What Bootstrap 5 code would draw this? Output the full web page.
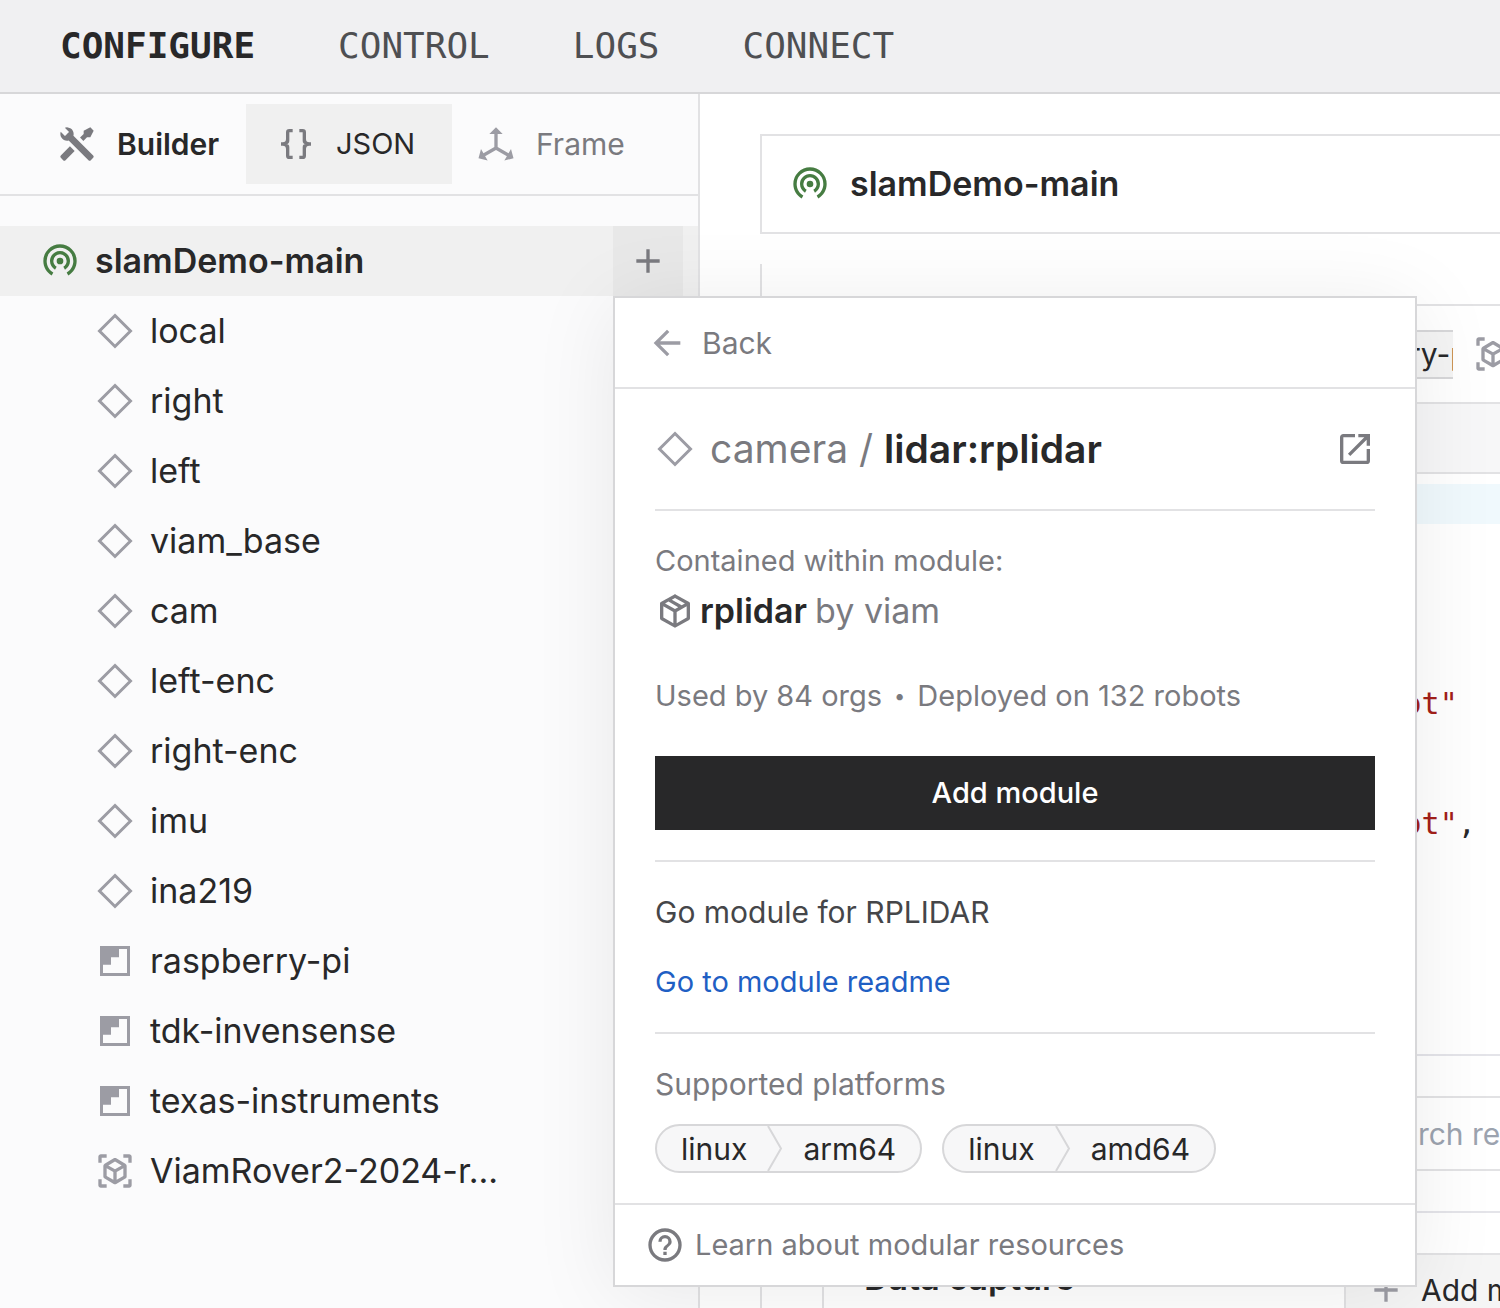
<!DOCTYPE html>
<html lang="en">
<head>
<meta charset="utf-8">
<meta name="viewport" content="width=device-width, initial-scale=1">
<title>slamDemo-main – Configure</title>
<link href="https://cdn.jsdelivr.net/npm/bootstrap@5.3.0/dist/css/bootstrap.min.css" rel="stylesheet">
<script defer src="https://cdn.jsdelivr.net/npm/bootstrap@5.3.0/dist/js/bootstrap.bundle.min.js"></script>
<style>
  :root { --ink: #282829; --muted: #7a7a7f; --soft: #9c9ca4; --line: #e2e2e4; --edge: #d7d7d9; --shade: #f0f0f0; }
  body { font-family: Inter, "Liberation Sans", sans-serif; font-size: 30px; line-height: 40px; color: var(--ink); }
  button, input { font: inherit; color: inherit; }
  a { text-decoration: none; }
  .ico { width: 40px; height: 40px; flex: none; fill: currentColor; }
  .soft { color: var(--soft); }
  .muted { color: var(--muted); }
  .ink { color: var(--ink); }
  .semi { font-weight: 600; }
  .live { color: #467c42; }
  .heading-text { font-size: 34px; font-weight: 600; }
  .note-text { font-size: 29px; }

  .topnav { background: #f0f0f2; border-bottom: 2px solid var(--edge); height: 94px; padding: 0 60px; gap: 83px; font: 36px/40px "DejaVu Sans Mono", monospace; }
  .topnav a { color: #4e4f52; }
  .topnav a.active { color: var(--ink); font-weight: 700; }

  .side { width: 700px; flex: none; background: #fbfbfc; border-right: 2px solid var(--line); }
  .tabs { height: 102px; border-bottom: 2px solid var(--line); padding-left: 27px; }
  .tab { height: 80px; border: 0; background: none; display: flex; align-items: center; gap: 20px; padding: 0 0 0 30px; }
  .tab-builder { width: 219px; }
  .tab-json { width: 206px; background: var(--shade); }
  .tab-frame { padding-left: 24px; }
  .tree { padding-top: 30px; }
  .tree-row { height: 70px; gap: 15px; }
  .tree-root { background: var(--shade); padding: 0 15px 0 40px; }
  .tree-item { padding-left: 95px; color: inherit; font-size: 34px; }
  .plus-btn { width: 70px; height: 70px; border: 0; background: #e8e8e8; color: var(--muted); }

  .pop { left: 0; top: 100%; width: 804px; z-index: 10; background: #fff; border: 2px solid var(--edge); box-shadow: 0 8px 80px rgba(0,0,0,.08); }
  .pop-head { height: 91px; border: 0; border-bottom: 2px solid var(--line); background: none; gap: 15px; padding: 0 32px; }
  .pop-body { padding: 0 40px 30px; }
  .pop-title { height: 122px; gap: 15px; font-size: 39px; border-bottom: 2px solid var(--line); margin-bottom: 30px; }
  .pop-foot { height: 82px; border-top: 2px solid var(--line); gap: 10px; padding: 0 30px; }
  .module { height: 60px; gap: 5px; margin-bottom: 35px; font-size: 34px; }
  .module .by { margin-left: 3px; }
  .usage { gap: 12px; }
  .usage .dot { font-size: 20px; }
  .rule { border-top: 2px solid var(--line); margin: 30px 0; }
  .add-btn { height: 74px; margin-top: 40px; border: 0; background: var(--ink); color: #fff; font-weight: 500; }
  .about { color: #454649; }
  .readme { color: #1f5fc4; display: block; margin-top: 30px; }
  .platforms { gap: 20px; margin-top: 20px; }
  .pill { height: 49px; border: 2px solid var(--edge); border-radius: 25px; background: #f7f7f8; padding: 0 24px; gap: 20px; }
  .pill svg { width: 16px; height: 45px; flex: none; fill: none; stroke: var(--edge); stroke-width: 2; }

  .work { padding: 40px 0 0 60px; }
  .machine { height: 100px; border: 2px solid var(--line); border-right: 0; padding: 0 28px; gap: 20px; }
  .parts { margin-top: 30px; border-left: 2px solid var(--line); padding: 40px 0 0 60px; }
  .part { min-width: 900px; border: 2px solid var(--line); }
  .part-head { height: 96px; gap: 20px; }
  .tagbox { width: 629px; padding-left: 451px; }
  .tag { height: 49px; border: 2px solid var(--edge); border-radius: 25px; background: #f4f4f4; padding: 0 22px; }
  .part-bar { height: 72px; border: solid var(--line); border-width: 2px 0; background: #f7f7f8; }
  .code-pane { padding: 10px 0; height: 580px; overflow: hidden; font-family: "DejaVu Sans Mono", monospace; }
  .code-pane div { height: 40px; padding-left: 128px; white-space: pre; }
  .code-pane .current { background: #f0f9fd; }
  .code-pane span { color: #a31f1a; }
  .search-row { border-top: 2px solid #e4e4e9; padding: 40px 0 40px 520px; }
  .search-row input { height: 75px; width: 300px; border: 2px solid var(--line); padding: 0 18px; background: #fff; }
  .search-row input::placeholder { color: #9ca3af; opacity: 1; }
  .capture { border-top: 2px solid #e4e4e9; padding-top: 40px; }
  .capture-name { width: 520px; flex: none; padding: 5px 0 0 40px; }
  .method-btn { height: 74px; width: 300px; border: 2px solid var(--line); background: #f5f5f5; gap: 15px; padding: 0 20px; }
</style>
</head>
<body>
<svg class="d-none">
  <symbol id="i-diamond" viewBox="0 0 24 24"><path fill="none" stroke="currentColor" stroke-width="1.8" d="M12 2.7 21.3 12 12 21.3 2.7 12Z"/></symbol>
  <symbol id="i-stair" viewBox="0 0 24 24"><path fill-rule="evenodd" d="M3 3H21V21H3ZM14.4 4.8V9.8H9.6V14.2H4.8V19.2H19.2V4.8Z"/></symbol>
  <symbol id="i-scan" viewBox="0 0 24 24"><path d="M17,22V20H20V17H22V20.5C22,20.89 21.84,21.24 21.54,21.54C21.24,21.84 20.89,22 20.5,22H17M7,22H3.5C3.11,22 2.76,21.84 2.46,21.54C2.16,21.24 2,20.89 2,20.5V17H4V20H7V22M17,2H20.5C20.89,2 21.24,2.16 21.54,2.46C21.84,2.76 22,3.11 22,3.5V7H20V4H17V2M7,2V4H4V7H2V3.5C2,3.11 2.16,2.76 2.46,2.46C2.76,2.16 3.11,2 3.5,2H7M13,17.25L17,14.95V10.36L13,12.66V17.25M12,10.92L16,8.63L12,6.28L8,8.63L12,10.92M7,14.95L11,17.25V12.66L7,10.36V14.95M18.23,7.59C18.73,7.91 19,8.34 19,8.91V15.23C19,15.8 18.73,16.23 18.23,16.55L12.75,19.73C12.25,20.05 11.75,20.05 11.25,19.73L5.77,16.55C5.27,16.23 5,15.8 5,15.23V8.91C5,8.34 5.27,7.91 5.77,7.59L11.25,4.41C11.5,4.28 11.75,4.22 12,4.22C12.25,4.22 12.5,4.28 12.75,4.41L18.23,7.59Z"/></symbol>
  <symbol id="i-live" viewBox="0 1 24 24"><path d="M12,11A2,2 0 0,0 10,13A2,2 0 0,0 12,15A2,2 0 0,0 14,13A2,2 0 0,0 12,11M18,13C18,9.69 15.31,7 12,7C8.69,7 6,9.69 6,13C6,15.22 7.21,17.15 9,18.19L10,16.45C8.81,15.75 8,14.47 8,13A4,4 0 0,1 12,9A4,4 0 0,1 16,13C16,14.47 15.19,15.75 14,16.45L15,18.19C16.79,17.15 18,15.22 18,13M12,3A10,10 0 0,0 2,13C2,16.7 4,19.92 7,21.65L8,19.92C5.61,18.53 4,15.96 4,13A8,8 0 0,1 12,5A8,8 0 0,1 20,13C20,15.96 18.38,18.53 16,19.92L17,21.65C20,19.92 22,16.7 22,13A10,10 0 0,0 12,3Z"/></symbol>
  <symbol id="i-plus" viewBox="0 0 24 24"><path d="M19,13H13V19H11V13H5V11H11V5H13V11H19V13Z"/></symbol>
</svg>

<div class="vh-100 d-flex flex-column overflow-hidden">
  <nav class="topnav d-flex align-items-center flex-shrink-0">
    <a class="active" href="#">CONFIGURE</a>
    <a href="#">CONTROL</a>
    <a href="#">LOGS</a>
    <a href="#">CONNECT</a>
  </nav>

  <div class="d-flex flex-fill">
    <aside class="side">
      <div class="tabs d-flex align-items-center">
        <button class="tab tab-builder semi" type="button"><svg class="ico muted" viewBox="0 0 24 24"><path d="M21.71 20.29L20.29 21.71A1 1 0 0 1 18.88 21.71L7 9.85A3.81 3.81 0 0 1 6 10A4 4 0 0 1 2.22 4.7L4.76 7.24L5.29 6.71L6.71 5.29L7.24 4.76L4.7 2.22A4 4 0 0 1 10 6A3.81 3.81 0 0 1 9.85 7L21.71 18.88A1 1 0 0 1 21.71 20.29M2.29 18.88A1 1 0 0 0 2.29 20.29L3.71 21.71A1 1 0 0 0 5.12 21.71L10.59 16.25L7.76 13.42M20 2L16 4V6L13.83 8.17L15.83 10.17L18 8H20L22 4Z"/></svg>Builder</button>
        <button class="tab tab-json note-text" type="button"><svg class="ico muted" viewBox="0 0 24 24"><path d="M8,3A2,2 0 0,0 6,5V9A2,2 0 0,1 4,11H3V13H4A2,2 0 0,1 6,15V19A2,2 0 0,0 8,21H10V19H8V14A2,2 0 0,0 6,12A2,2 0 0,0 8,10V5H10V3M16,3A2,2 0 0,1 18,5V9A2,2 0 0,0 20,11H21V13H20A2,2 0 0,0 18,15V19A2,2 0 0,1 16,21H14V19H16V14A2,2 0 0,1 18,12A2,2 0 0,1 16,10V5H14V3H16Z"/></svg>JSON</button>
        <button class="tab tab-frame muted" type="button"><svg class="ico soft" viewBox="0 0 24 24"><path d="M12,2L16,6H13V13.85L19.53,17.61L21,15.03L22.5,20.5L17,21.96L18.53,19.35L12,15.58L5.47,19.35L7,21.96L1.5,20.5L3,15.03L4.47,17.61L11,13.85V6H8L12,2Z"/></svg>Frame</button>
      </div>

      <div class="tree">
        <div class="tree-row tree-root d-flex align-items-center">
          <svg class="ico live"><use href="#i-live"/></svg>
          <span class="heading-text flex-fill">slamDemo-main</span>
          <div class="position-relative">
            <button class="plus-btn d-flex align-items-center justify-content-center" type="button" aria-label="Add component"><svg class="ico"><use href="#i-plus"/></svg></button>

            <section class="pop position-absolute">
              <button class="pop-head d-flex align-items-center w-100 muted" type="button"><svg class="ico soft" viewBox="0 0 24 24"><path d="M20 11H7.83l5.59-5.59L12 4l-8 8 8 8 1.41-1.41L7.83 13H20z"/></svg>Back</button>
              <div class="pop-body">
                <div class="pop-title d-flex align-items-center muted">
                  <svg class="ico soft"><use href="#i-diamond"/></svg>
                  <span class="flex-fill">camera / <span class="semi ink">lidar:rplidar</span></span>
                  <a class="muted d-flex" href="#" aria-label="Open in registry"><svg class="ico" viewBox="0 0 24 24"><path d="M14,3V5H17.59L7.76,14.83L9.17,16.24L19,6.41V10H21V3M19,19H5V5H12V3H5C3.89,3 3,3.9 3,5V19A2,2 0 0,0 5,21H19A2,2 0 0,0 21,19V12H19V19Z"/></svg></a>
                </div>
                <div class="muted note-text">Contained within module:</div>
                <div class="module d-flex align-items-center muted">
                  <svg class="ico" viewBox="0 0 24 24"><path d="M21,16.5C21,16.88 20.79,17.21 20.47,17.38L12.57,21.82C12.41,21.94 12.21,22 12,22C11.79,22 11.59,21.94 11.43,21.82L3.53,17.38C3.21,17.21 3,16.88 3,16.5V7.5C3,7.12 3.21,6.79 3.53,6.62L11.43,2.18C11.59,2.06 11.79,2 12,2C12.21,2 12.41,2.06 12.57,2.18L20.47,6.62C20.79,6.79 21,7.12 21,7.5V16.5M12,4.15L10.11,5.22L16,8.61L17.96,7.5L12,4.15M6.04,7.5L12,10.85L13.96,9.75L8.08,6.35L6.04,7.5M5,15.91L11,19.29V12.58L5,9.21V15.91M19,15.91V9.21L13,12.58V19.29L19,15.91Z"/></svg>
                  <span class="semi ink">rplidar</span><span class="by">by viam</span>
                </div>
                <div class="usage note-text d-flex muted"><span>Used by 84 orgs</span><span class="dot">•</span><span>Deployed on 132 robots</span></div>
                <button class="add-btn note-text w-100" type="button">Add module</button>
                <div class="rule"></div>
                <div class="about">Go module for RPLIDAR</div>
                <a class="readme note-text" href="#">Go to module readme</a>
                <div class="rule"></div>
                <div class="muted">Supported platforms</div>
                <div class="platforms d-flex">
                  <span class="pill d-flex align-items-center">linux<svg viewBox="0 0 16 45"><path d="M1 0 14 22.5 1 45"/></svg>arm64</span>
                  <span class="pill d-flex align-items-center">linux<svg viewBox="0 0 16 45"><path d="M1 0 14 22.5 1 45"/></svg>amd64</span>
                </div>
              </div>
              <a class="pop-foot note-text d-flex align-items-center muted" href="#"><svg class="ico" viewBox="0 0 24 24"><path d="M11,18H13V16H11V18M12,2A10,10 0 0,0 2,12A10,10 0 0,0 12,22A10,10 0 0,0 22,12A10,10 0 0,0 12,2M12,20C7.59,20 4,16.41 4,12C4,7.59 7.59,4 12,4C16.41,4 20,7.59 20,12C20,16.41 16.41,20 12,20M12,6A4,4 0 0,0 8,10H10A2,2 0 0,1 12,8A2,2 0 0,1 14,10C14,12 11,11.75 11,15H13C13,12.75 16,12.5 16,10A4,4 0 0,0 12,6Z"/></svg>Learn about modular resources</a>
            </section>
          </div>
        </div>
        <a class="tree-row tree-item d-flex align-items-center" href="#"><svg class="ico soft"><use href="#i-diamond"/></svg>local</a>
        <a class="tree-row tree-item d-flex align-items-center" href="#"><svg class="ico soft"><use href="#i-diamond"/></svg>right</a>
        <a class="tree-row tree-item d-flex align-items-center" href="#"><svg class="ico soft"><use href="#i-diamond"/></svg>left</a>
        <a class="tree-row tree-item d-flex align-items-center" href="#"><svg class="ico soft"><use href="#i-diamond"/></svg>viam_base</a>
        <a class="tree-row tree-item d-flex align-items-center" href="#"><svg class="ico soft"><use href="#i-diamond"/></svg>cam</a>
        <a class="tree-row tree-item d-flex align-items-center" href="#"><svg class="ico soft"><use href="#i-diamond"/></svg>left-enc</a>
        <a class="tree-row tree-item d-flex align-items-center" href="#"><svg class="ico soft"><use href="#i-diamond"/></svg>right-enc</a>
        <a class="tree-row tree-item d-flex align-items-center" href="#"><svg class="ico soft"><use href="#i-diamond"/></svg>imu</a>
        <a class="tree-row tree-item d-flex align-items-center" href="#"><svg class="ico soft"><use href="#i-diamond"/></svg>ina219</a>
        <a class="tree-row tree-item d-flex align-items-center" href="#"><svg class="ico soft"><use href="#i-stair"/></svg>raspberry-pi</a>
        <a class="tree-row tree-item d-flex align-items-center" href="#"><svg class="ico soft"><use href="#i-stair"/></svg>tdk-invensense</a>
        <a class="tree-row tree-item d-flex align-items-center" href="#"><svg class="ico soft"><use href="#i-stair"/></svg>texas-instruments</a>
        <a class="tree-row tree-item d-flex align-items-center" href="#"><svg class="ico soft"><use href="#i-scan"/></svg>ViamRover2-2024-r...</a>
      </div>
    </aside>

    <main class="work flex-fill overflow-hidden">
      <div class="machine d-flex align-items-center heading-text">
        <svg class="ico live"><use href="#i-live"/></svg>slamDemo-main
      </div>
      <div class="parts">
        <div class="part">
          <div class="part-head d-flex align-items-center">
            <div class="tagbox d-flex overflow-hidden flex-shrink-0"><span class="tag d-flex align-items-center flex-shrink-0">raspberry-pi</span></div>
            <svg class="ico soft"><use href="#i-scan"/></svg>
          </div>
          <div class="part-bar"></div>
          <div class="code-pane"><div class="current">{</div><div></div><div></div><div></div><div></div><div>  "model": <span>"slam-demo-robot"</span></div><div></div><div></div><div>  "frame": <span>"slam-demo-robot"</span>,</div></div>
          <div class="search-row"><input type="text" aria-label="Search resources" placeholder="Search resources"></div>
          <div class="capture d-flex">
            <div class="capture-name heading-text">Data capture</div>
            <button class="method-btn d-flex align-items-center" type="button"><svg class="ico soft"><use href="#i-plus"/></svg>Add method</button>
          </div>
        </div>
      </div>
    </main>
  </div>
</div>
</body>
</html>
